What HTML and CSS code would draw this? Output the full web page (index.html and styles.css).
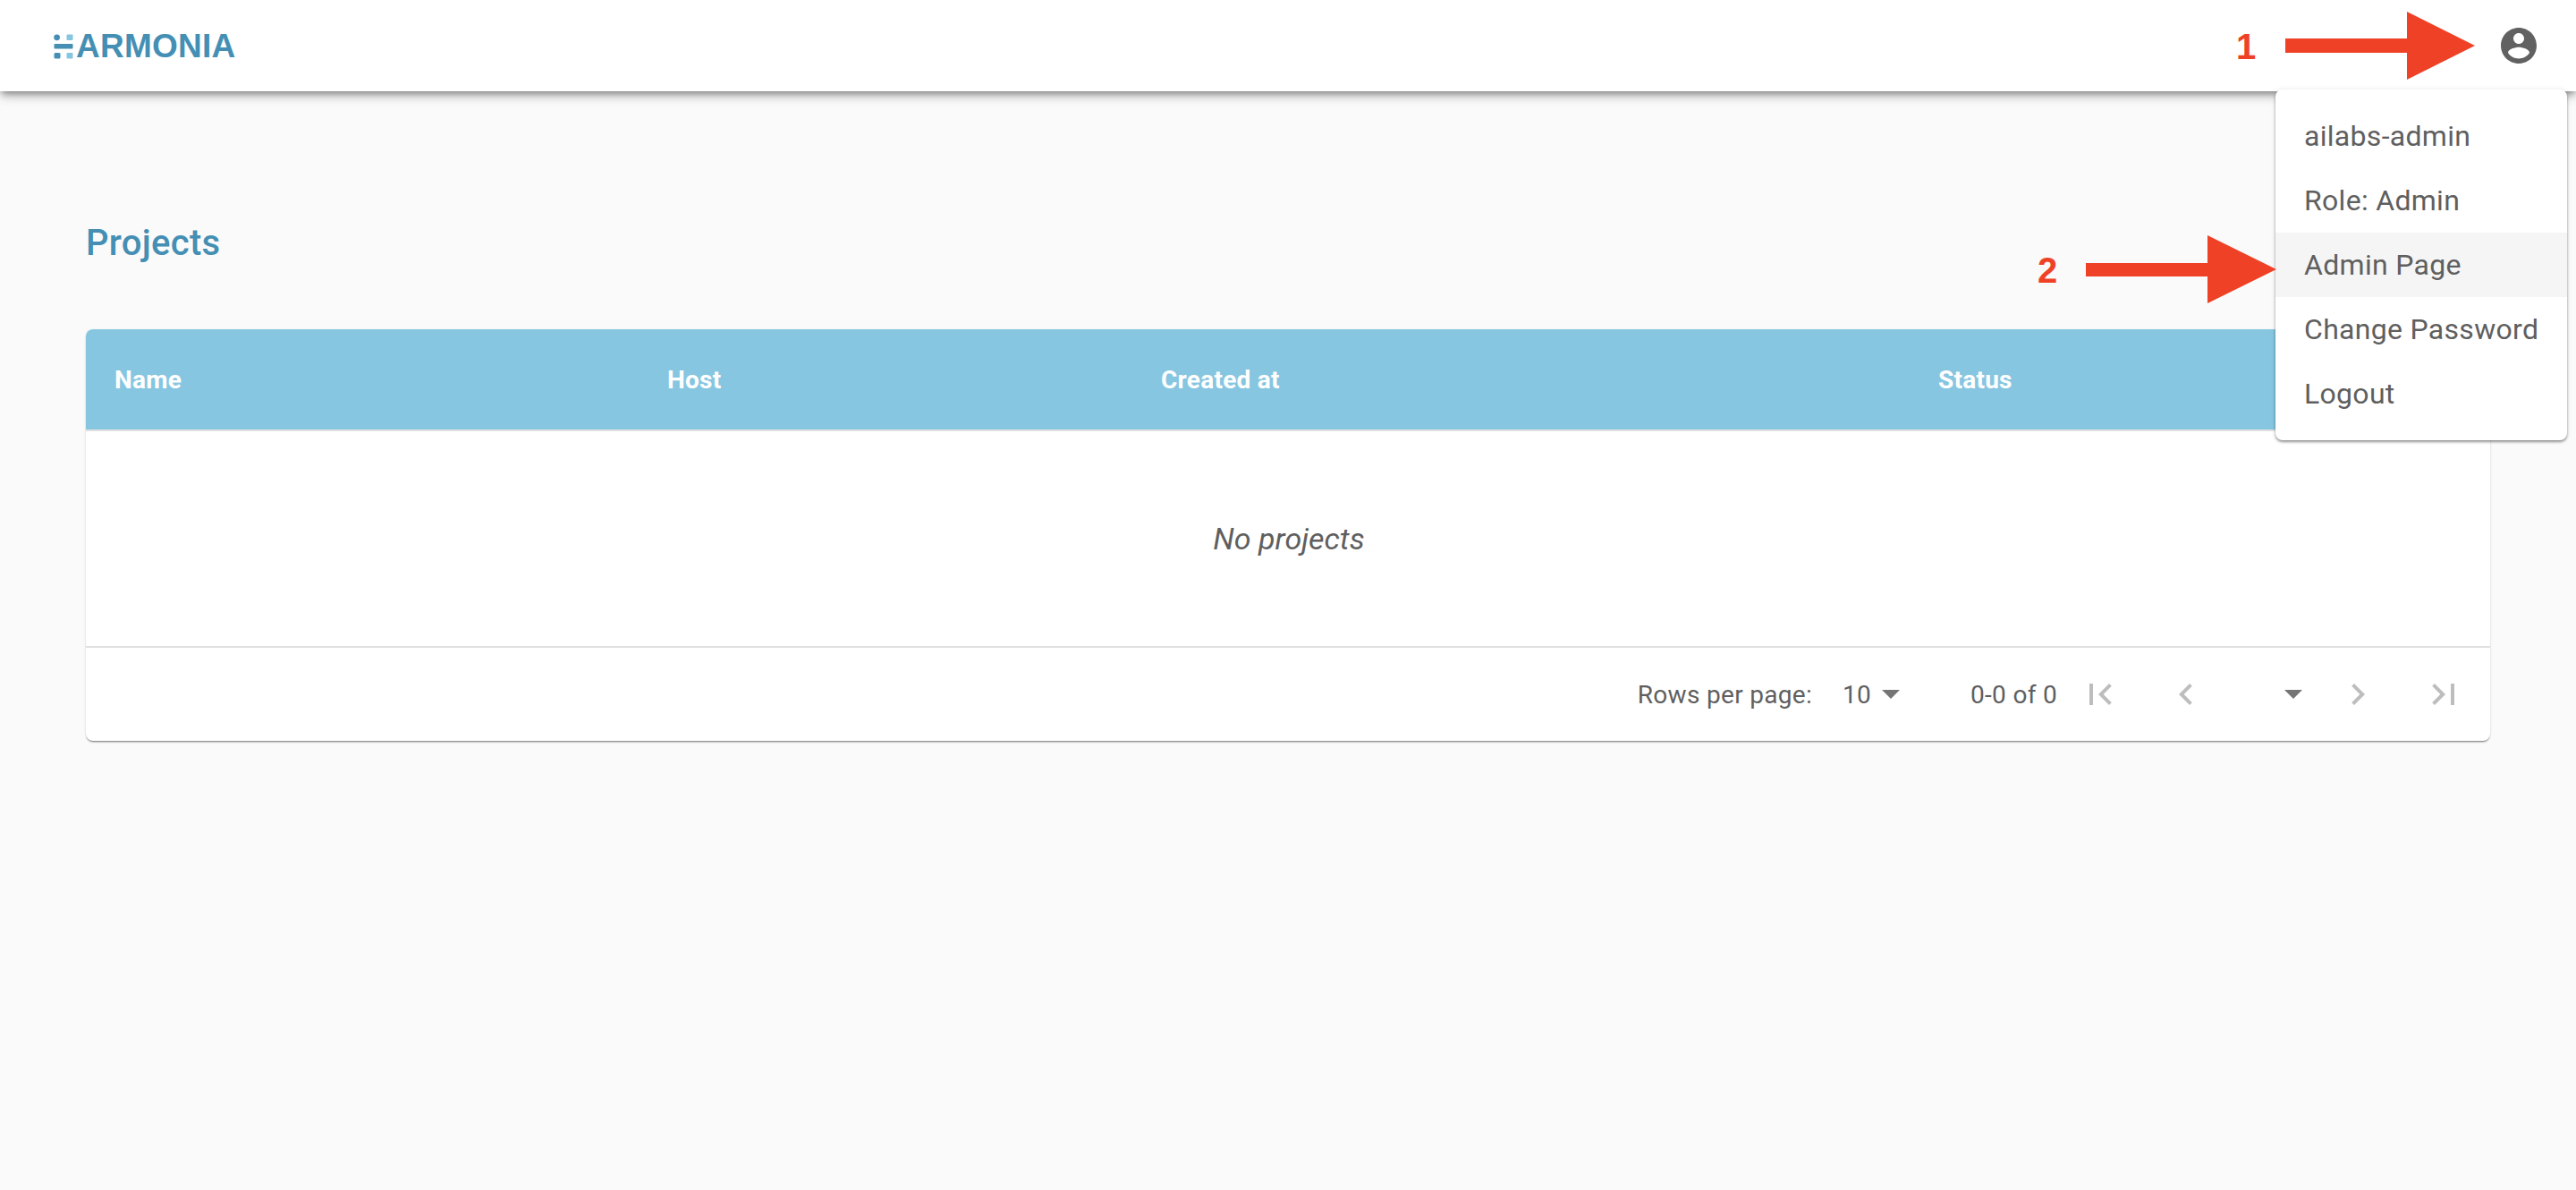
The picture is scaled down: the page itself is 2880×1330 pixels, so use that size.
FILE: index.html
```html
<!DOCTYPE html>
<html lang="en">
<head>
<meta charset="utf-8">
<title>Harmonia</title>
<link rel="stylesheet" href="styles.css">
</head>
<body>
<header class="appbar">
  <div class="logo">
    <svg class="logo-mark" width="22" height="28" viewBox="0 0 22 28">
      <circle cx="3.6" cy="3.8" r="3.4" fill="#458fb4"/>
      <rect x="14.500" y="0.500" width="7" height="6.500" rx="1" fill="#86c6e0"/>
      <rect x="0.500" y="11" width="21" height="5.500" rx="1" fill="#458fb4"/>
      <rect x="0.500" y="21" width="7" height="6.500" rx="1.500" fill="#458fb4"/>
      <rect x="14.500" y="21" width="7" height="6.500" rx="1" fill="#86c6e0"/>
    </svg>
    <span class="logo-text">ARMONIA</span>
  </div>
  <svg class="account" width="48" height="48" viewBox="0 0 24 24"><path fill="#616161" d="M12 2C6.480 2 2 6.480 2 12s4.480 10 10 10 10-4.480 10-10S17.520 2 12 2zm0 3c1.660 0 3 1.340 3 3s-1.340 3-3 3-3-1.340-3-3 1.340-3 3-3zm0 14.200c-2.500 0-4.710-1.280-6-3.220.030-1.990 4-3.080 6-3.080 1.990 0 5.970 1.090 6 3.080-1.290 1.940-3.500 3.220-6 3.220z"/></svg>
</header>

<main class="content">
  <h1 class="title">Projects</h1>
  <section class="card">
    <div class="thead">
      <span>Name</span><span>Host</span><span>Created at</span><span>Status</span>
    </div>
    <div class="empty">No projects</div>
    <div class="tfoot">
      <span class="rows-label">Rows per page:</span>
      <span class="rows-select">10<svg width="20" height="10" viewBox="0 0 20 10"><path d="M0 0h20L10 10z" fill="#757575"/></svg></span>
      <span class="range">0-0 of 0</span>
      <div class="pager">
        <svg width="48" height="48" viewBox="0 0 24 24"><path fill="#bdbdbd" d="M18.410 16.590 13.820 12l4.590-4.590L17 6l-6 6 6 6zM6 6h2v12H6z"/></svg>
        <svg width="48" height="48" viewBox="0 0 24 24"><path fill="#bdbdbd" d="M15.410 7.410 14 6l-6 6 6 6 1.410-1.410L10.830 12z"/></svg>
        <svg class="page-caret" width="20" height="10" viewBox="0 0 20 10"><path d="M0 0h20L10 10z" fill="#757575"/></svg>
        <svg width="48" height="48" viewBox="0 0 24 24"><path fill="#bdbdbd" d="M10 6 8.590 7.410 13.170 12l-4.580 4.590L10 18l6-6z"/></svg>
        <svg width="48" height="48" viewBox="0 0 24 24"><path fill="#bdbdbd" d="M5.590 7.410 10.180 12l-4.590 4.590L7 18l6-6-6-6zM16 6h2v12h-2z"/></svg>
      </div>
    </div>
  </section>
</main>

<nav class="menu">
  <div class="menu-item">ailabs-admin</div>
  <div class="menu-item">Role: Admin</div>
  <div class="menu-item is-hover">Admin Page</div>
  <div class="menu-item">Change Password</div>
  <div class="menu-item">Logout</div>
</nav>

<span class="step step-one">1</span>
<svg class="arrow arrow-one" width="212" height="76" viewBox="0 0 212 76"><path fill="#ee4126" d="M0 30h136V0l76 38-76 38V46H0z"/></svg>
<span class="step step-two">2</span>
<svg class="arrow arrow-two" width="213" height="76" viewBox="0 0 213 76"><path fill="#ee4126" d="M0 31h136V0l77 38-77 38V46H0z"/></svg>
</body>
</html>
```
FILE: styles.css
```css
* { box-sizing: border-box; }
html, body { margin: 0; height: 100%; }
body {
  background: #fafafa;
  font-family: Roboto, "Liberation Sans", sans-serif;
  color: #5f5f5f;
  overflow: hidden;
  position: relative;
}
.appbar {
  height: 102px;
  background: #fff;
  display: flex;
  align-items: center;
  justify-content: space-between;
  padding: 0 40px 0 60px;
  box-shadow: 0 4px 8px -2px rgba(0,0,0,.45), 0 8px 10px rgba(0,0,0,.1), 0 2px 20px rgba(0,0,0,.06);
}
.logo { display: flex; align-items: center; gap: 3px; padding-top: 2px; }
.logo-mark { display: block; }
.logo-text {
  font-family: "Liberation Sans", Arial, sans-serif;
  font-weight: 700;
  font-size: 37px;
  line-height: 28px;
  letter-spacing: .25px;
  color: #458fb4;
}
.account { display: block; }

.content { padding: 0 96px; }
.title {
  margin: 0;
  padding-top: 143px;
  height: 266px;
  font-size: 40px;
  line-height: 54px;
  font-weight: 500;
  letter-spacing: .3px;
  color: #458fb4;
}
.card {
  background: #fff;
  border-radius: 8px;
  overflow: hidden;
  box-shadow: 0 2px 2px -1px rgba(0,0,0,.5), 0 1px 3px rgba(0,0,0,.1);
}
.thead {
  height: 114px;
  background: #86c6e0;
  border-bottom: 2px solid #e0e0e0;
  display: grid;
  grid-template-columns: 618px 552px 869px 1fr;
  align-items: center;
  padding-left: 32px;
  color: #fff;
  font-size: 28px;
  font-weight: 700;
  letter-spacing: .25px;
}
.empty {
  height: 242px;
  display: flex;
  align-items: center;
  justify-content: center;
  padding-left: 2px;
  font-size: 34px;
  font-style: italic;
  border-bottom: 2px solid #e0e0e0;
}
.tfoot {
  height: 104px;
  display: flex;
  align-items: center;
  justify-content: flex-end;
  padding-right: 28px;
  font-size: 28px;
  letter-spacing: .3px;
}
.rows-select { display: flex; align-items: center; gap: 12px; margin-left: 34px; }
.range { margin-left: 79px; }
.pager { display: flex; align-items: center; margin-left: 24px; gap: 48px; }
.page-caret { margin: 0 -10px 0 38px; }

.menu {
  position: absolute;
  left: 2544px;
  top: 100px;
  width: 326px;
  padding: 16px 0;
  background: #fff;
  border-radius: 8px;
  box-shadow: 0 2px 3px rgba(0,0,0,.4), 0 0 6px rgba(0,0,0,.08);
}
.menu-item {
  height: 72px;
  padding: 0 32px;
  display: flex;
  align-items: center;
  font-size: 32px;
  letter-spacing: .3px;
  white-space: nowrap;
}
.is-hover { background: #f5f5f5; }

.arrow { position: absolute; display: block; }
.arrow-one { left: 2555px; top: 13px; }
.arrow-two { left: 2332px; top: 263px; }
.step {
  position: absolute;
  font-family: "Liberation Sans", Arial, sans-serif;
  font-weight: 700;
  font-size: 40px;
  line-height: 46px;
  color: #ee4126;
}
.step-one { left: 2500px; top: 29px; }
.step-two { left: 2278px; top: 279px; }
```
